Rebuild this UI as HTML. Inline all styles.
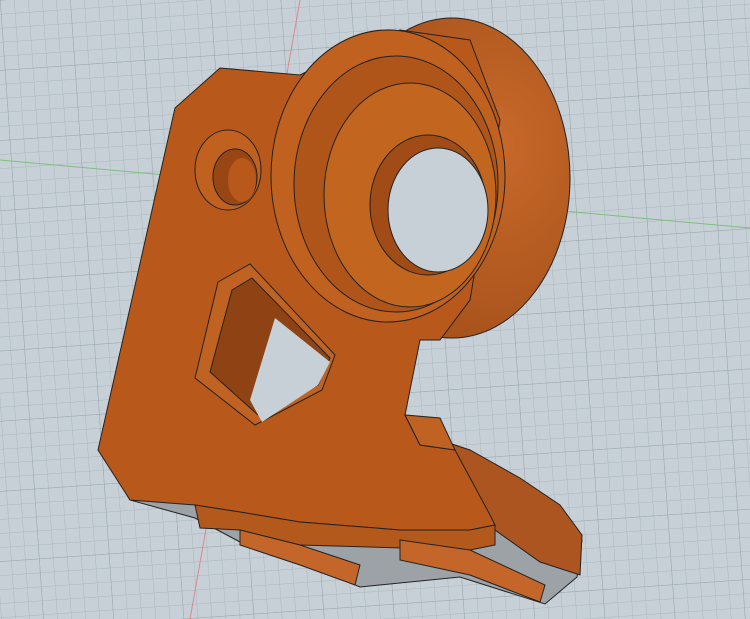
<!DOCTYPE html>
<html><head><meta charset="utf-8"><style>
html,body{margin:0;padding:0;width:750px;height:619px;overflow:hidden;background:#c6d0d6}
</style></head><body>
<svg width="750" height="619" viewBox="0 0 750 619" xmlns="http://www.w3.org/2000/svg">
<defs>
<pattern id="g" width="14" height="14" patternUnits="userSpaceOnUse" patternTransform="rotate(-4)">
<path d="M0 0H14M0 0V14" stroke="#aab6bd" stroke-width="1" fill="none"/>
</pattern>
<pattern id="G" width="70" height="70" patternUnits="userSpaceOnUse" patternTransform="rotate(-4)">
<path d="M0 0H70M0 0V70" stroke="#9aa7af" stroke-width="1" fill="none"/>
</pattern>
<radialGradient id="rw" cx="0.7" cy="0.4" r="0.7"><stop offset="0" stop-color="#c8692a"/><stop offset="1" stop-color="#a4501a"/></radialGradient>
</defs>
<rect width="750" height="619" fill="#c6d0d6"/>
<rect width="750" height="619" fill="url(#g)"/>
<rect width="750" height="619" fill="url(#G)"/>
<path d="M300 0 L190 619" stroke="#d98a8a" stroke-width="1"/>
<path d="M0 160 L750 228" stroke="#7fbf7f" stroke-width="1"/>
<polygon points="100,450 130,500 195,518 240,542 300,562 360,587 460,577 545,604 577,577 582,540 470,450 300,420" fill="#9da2a7" stroke="#222" stroke-width="1"/>
<polygon points="440,440 470,450 520,478 560,505 582,535 580,575 540,562 495,530" fill="#ac5520" stroke="#222" stroke-width="1"/>
<ellipse cx="452" cy="178" rx="118" ry="160" fill="url(#rw)" stroke="#222"/>
<path d="M220,68 L300,75 L330,60 L400,30 L470,40 L500,120 L470,300 L440,340 L420,340 L405,415 L420,445 L455,450 L490,515 L495,525 L470,530 L400,530 L300,522 L240,512 L195,505 L130,500 L98,450 L175,108 Z" fill="#b8591b" stroke="#222" stroke-width="1"/>
<ellipse cx="388" cy="176" rx="117" ry="146" fill="#c0611f" stroke="#222"/>
<ellipse cx="396" cy="184" rx="102" ry="128" fill="#b0551a" stroke="#222"/>
<ellipse cx="410" cy="195" rx="86" ry="112" fill="#c2661f" stroke="#222"/>
<ellipse cx="428" cy="205" rx="58" ry="70" fill="#a14c17" stroke="#222"/>
<ellipse cx="438" cy="210" rx="50" ry="62" fill="#c6d0d6" stroke="#222"/>
<ellipse cx="228" cy="170" rx="33" ry="40" fill="#c0611f" stroke="#222"/>
<ellipse cx="235" cy="177" rx="22" ry="28" fill="#984714" stroke="#222"/>
<ellipse cx="242" cy="180" rx="14" ry="22" fill="#b8591b"/>
<polygon points="218,282 250,264 335,355 322,390 255,425 195,378" fill="#c06322" stroke="#222"/>
<polygon points="232,290 252,278 330,358 318,385 258,415 210,372" fill="#8f4314" stroke="#222"/>
<polygon points="275,318 330,362 318,385 262,422 250,400" fill="#c6d0d6"/>
<polygon points="195,505 240,512 300,522 400,530 470,530 495,525 495,545 470,550 300,545 240,530 200,528" fill="#b3591c" stroke="#222"/>
<polygon points="240,530 300,545 360,565 355,585 300,565 240,545" fill="#c4662a" stroke="#222"/>
<polygon points="400,540 470,550 545,585 540,602 470,575 400,560" fill="#c4662a" stroke="#222"/>
<polygon points="405,415 420,445 455,450 440,418" fill="#c06322" stroke="#222"/>
</svg>
</body></html>
